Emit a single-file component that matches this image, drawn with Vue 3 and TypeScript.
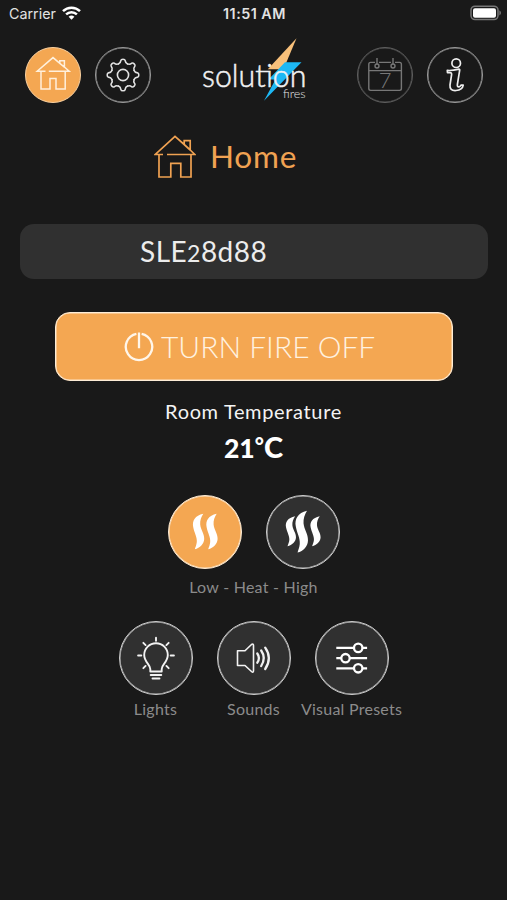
<script setup lang="ts">
import { ref } from 'vue'

type Heat = 'low' | 'high'
const heat = ref<Heat>('low')
const room = { value: '21', unit: 'C' }
const teeth = [0, 45, 90, 135, 180, 225, 270, 315]
const rays = [-135, -90, -45, 0, 45, 90, 135]
const flame =
  'M35.3 18.8C27 20.5 24 26 25.2 32C26.3 38 29.300 42 28.800 47C28.500 50 27.500 52 26.800 54.300C32 53 36 49 36.200 44C36.400 38.500 32.700 35 32.200 29.500C31.900 25.500 33.200 22 35.300 18.800Z'
</script>

<template>
  <main class="screen">
    <header class="status">
      <div class="carrier">
        <span>Carrier</span>
        <svg width="19" height="14" viewBox="0 0 19 14" fill="none" stroke="#fff" stroke-width="2.5">
          <path d="M1 5.2a12.2 12.2 0 0 1 17 0" />
          <path d="M4.1 8.4a7.8 7.8 0 0 1 10.8 0" />
          <path d="M9.5 13.8 6.6 10.8a4.3 4.3 0 0 1 5.8 0Z" fill="#fff" stroke="none" />
        </svg>
      </div>
      <span class="time">11:51 AM</span>
      <svg class="battery" width="32" height="16" viewBox="0 0 32 16">
        <rect x="1" y="1.2" width="27" height="13.4" rx="4" fill="none" stroke="#777" stroke-width="1.5" />
        <rect x="3" y="3.2" width="23" height="9.6" rx="2" fill="#fff" />
        <path d="M29.4 5.3q3.2 2.6 0 5.2Z" fill="#777" />
      </svg>
    </header>

    <nav class="nav">
      <button class="nav-btn active" aria-label="Home">
        <svg width="56" height="56" viewBox="0 0 56 56" fill="none" stroke="#fff0dc" stroke-width="1.5">
          <path d="M16 24.2H12.2L28 10.6l6.8 5.8v-2.6h4.6v6.2l4.8 4.2H40.2V42H31V31.5h-6V42H16V24.2h4.5M23.800 24.2H40.2M34.800 16.4l4.6 3.8" />
        </svg>
      </button>
      <button class="nav-btn" aria-label="Settings">
        <svg width="56" height="56" viewBox="0 0 56 56" fill="none" stroke="#e2e2e2" stroke-width="1.6" stroke-linejoin="round" stroke-linecap="round">
          <circle cx="28" cy="28" r="5.6" />
          <path
            v-for="a in teeth"
            :key="a"
            :transform="`rotate(${a} 28 28)`"
            d="M23.4 16.9Q25.6 16.1 25.9 13.4Q26.1 12.2 28 12.2Q29.9 12.2 30.1 13.4Q30.4 16.1 32.6 16.9"
          />
        </svg>
      </button>
      <svg class="logo" width="108" height="68" viewBox="0 0 108 68">
        <path d="M96.500 2.300 67.800 33.300H83.500Z" fill="#f8c07a" />
        <path d="M85 26.300H101.500L64 64.800 75.500 43.500H68.500Z" fill="#1db8f4" />
        <text class="logo-word" x="2" y="51" textLength="104.500" lengthAdjust="spacingAndGlyphs">solution</text>
        <text class="logo-sub" x="83" y="62" textLength="22.600" lengthAdjust="spacingAndGlyphs">fires</text>
      </svg>
      <button class="nav-btn muted" aria-label="Schedule">
        <svg width="56" height="56" viewBox="0 0 56 56" fill="none" stroke="#777" stroke-width="1.4">
          <path d="M18 15.4h-4.4q-1.8 0-1.8 1.8v24.4q0 1.8 1.8 1.8h29q1.8 0 1.8-1.8V17.2q0-1.8-1.8-1.8H38M22 15.4h12M11.8 23.6h32.6M20 11v6.5M36 11v6.5" />
          <circle cx="20" cy="19" r="2" />
          <circle cx="36" cy="19" r="2" />
          <text class="cal-day" x="28.2" y="41" text-anchor="middle">7</text>
        </svg>
      </button>
      <button class="nav-btn" aria-label="Information">
        <svg width="56" height="56" viewBox="0 0 56 56" fill="none" stroke="#eee" stroke-width="1.7" stroke-linejoin="round">
          <circle cx="29.2" cy="16.2" r="4.3" />
          <path d="M20.3 23.4q4.300.5 11.700-1.200.8 0 .7 1L30.400 37.300q-.4 3.200 2 2.400 1.300-.5 1.600-1.600h2.200q-.8 5-7.200 5.400-6.600.5-6-5.500l1.600-10.400q.3-1.900-1.500-1.900h-2.600Z" />
        </svg>
      </button>
    </nav>

    <h1 class="title">
      <svg width="42" height="44" viewBox="0 0 42 44" fill="none" stroke="#f0a252" stroke-width="1.7">
        <path d="M5 20.500H1.300L21 2.300l9.200 8.200V6.600h6v9.400l4.600 4.500H37V43H26.800V29.300h-10V43H5V20.500h4M13 20.500h24M30.200 10.500l6 5.500" />
      </svg>
      <span>Home</span>
    </h1>

    <div class="device">
      <span class="device-name">SLE<span class="old">2</span>8d88</span>
    </div>

    <button class="power">
      <svg width="32" height="32" viewBox="0 0 32 32" fill="none" stroke="#fff6ea" stroke-width="2.3">
        <path d="M13.4 2.900A13.200 13.200 0 1 0 18.600 2.900M16 1.500V17.300" />
      </svg>
      <span>TURN FIRE OFF</span>
    </button>

    <p class="room-label"><span>Room Temperature</span></p>
    <p class="room-value"><span class="num">{{ room.value }}</span><span class="deg">°</span><span>{{ room.unit }}</span></p>

    <section class="row heat">
      <button class="round" :class="{ on: heat === 'low' }" aria-label="Low heat" @click="heat = 'low'">
        <svg width="74" height="74" viewBox="0 0 74 74" fill="#fff">
          <path :d="flame" />
          <path :d="flame" transform="translate(13.4 0)" />
        </svg>
      </button>
      <button class="round" :class="{ on: heat === 'high' }" aria-label="High heat" @click="heat = 'high'">
        <svg width="74" height="74" viewBox="0 0 74 74" fill="#fff">
          <path :d="flame" transform="translate(-2.6 5.4) scale(0.9 0.845)" />
          <path :d="flame" transform="translate(1.800 -6.500) scale(1.110 1.180)" />
          <path :d="flame" transform="translate(22 5.4) scale(0.9 0.845)" />
        </svg>
      </button>
    </section>
    <p class="caption heat-caption"><span>Low - Heat - High</span></p>

    <section class="row tools">
      <div class="tool">
        <button class="round" aria-label="Lights">
          <svg width="74" height="74" viewBox="0 0 74 74" fill="none" stroke="#f2f2f2" stroke-width="1.900" stroke-linecap="round">
            <path d="M31.300 50.500V48C31.300 43.500 25.200 41 25.200 34A11.800 11.800 0 0 1 48.800 34C48.800 41 42.700 43.500 42.700 48V50.500Z" stroke-linejoin="round" />
            <path d="M31.700 54h10.600M33.500 57.500h7" />
            <path v-for="a in rays" :key="a" :transform="`rotate(${a} 37 34.500)`" d="M37 19.800V16.600" />
          </svg>
        </button>
        <span class="caption">Lights</span>
      </div>
      <div class="tool">
        <button class="round" aria-label="Sounds">
          <svg width="74" height="74" viewBox="0 0 74 74" fill="none" stroke="#f2f2f2" stroke-width="1.600" stroke-linejoin="round">
            <path d="M20.500 29.800H28L34.500 23.500Q36.500 22.300 36.500 24.500V49.500Q36.500 52.200 34.500 50.500L28 44.500H20.500Z" />
            <g stroke-width="2.300" stroke-linecap="round">
              <path d="M40.300 32.500Q43.500 37 40.300 41.700M44.200 29.500Q49.300 37 44.200 45M48.200 26.600Q55.500 37 48.200 48" />
            </g>
          </svg>
        </button>
        <span class="caption">Sounds</span>
      </div>
      <div class="tool">
        <button class="round" aria-label="Visual Presets">
          <svg width="74" height="74" viewBox="0 0 74 74" fill="none" stroke="#fff" stroke-width="2.300">
            <path d="M21.300 26.900h17.500M47.600 26.900h4.500M21.300 37.200h5M34.900 37.200h17.200M21.300 47.300h17.500M47.600 47.300h4.500" />
            <circle cx="43.200" cy="26.900" r="4.200" />
            <circle cx="30.500" cy="37.200" r="4.200" />
            <circle cx="43.200" cy="47.300" r="4.200" />
          </svg>
        </button>
        <span class="caption">Visual Presets</span>
      </div>
    </section>
  </main>
</template>

<style>
body {
  background: #191919;
}
</style>

<style scoped>
.screen {
  box-sizing: border-box;
  width: 507px;
  height: 900px;
  overflow: hidden;
  background: #191919;
  color: #f4f4f4;
  font-family: Lato, sans-serif;
}
button {
  box-sizing: border-box;
  padding: 0;
  margin: 0;
  font: inherit;
  color: inherit;
}
p,
h1 {
  margin: 0;
  font-weight: 400;
}
svg {
  display: block;
  flex: none;
}
.status {
  height: 28px;
  padding: 0 5px 0 9px;
  display: grid;
  grid-template-columns: 1fr auto 1fr;
  align-items: center;
  box-sizing: border-box;
  font: 400 14.300px/28px Inter, sans-serif;
  color: #e2e2e2;
}
.carrier {
  display: flex;
  align-items: center;
  gap: 6px;
}
.carrier svg {
  margin-top: -2px;
}
.time {
  margin-left: -2px;
  font-weight: 600;
  letter-spacing: 0.500px;
}
.battery {
  justify-self: end;
  margin-bottom: 2px;
}
.nav {
  height: 56px;
  margin-top: 19px;
  padding: 0 24px 0 25px;
  display: flex;
}
.nav-btn {
  width: 56px;
  height: 56px;
  border: 1px solid #9c9c9c;
  box-shadow: inset 0 0 0 0.500px #8a8a8a;
  border-radius: 50%;
  background: transparent;
  display: flex;
  align-items: center;
  justify-content: center;
  flex: none;
}
.nav-btn + .nav-btn {
  margin-left: 14px;
}
.nav-btn.active {
  background: #f4a752;
  border-color: #f9d0a0;
  box-shadow: none;
}
.nav-btn.muted {
  border-color: #606060;
  box-shadow: inset 0 0 0 0.500px #505050;
}
.logo {
  margin: -11px auto 0;
  overflow: visible;
}
.logo-word {
  font: 300 32px Lato, sans-serif;
  fill: #f2f2f2;
  stroke: #f2f2f2;
  stroke-width: 0.500px;
}
.logo-sub {
  font: 300 12px Lato, sans-serif;
  fill: #e6e6e6;
}
.cal-day {
  font: 300 22px Lato, sans-serif;
  fill: #777;
  stroke: none;
}
.title {
  height: 44px;
  margin-top: 31px;
  padding-left: 154px;
  display: flex;
  align-items: center;
  gap: 14px;
  font-size: 31.500px;
  line-height: 44px;
  letter-spacing: 0.800px;
  color: #f0a252;
}
.device {
  box-sizing: border-box;
  height: 55px;
  margin: 46px 19px 0 20px;
  padding: 0 0 2px 120px;
  border-radius: 14px;
  background: #303030;
  display: flex;
  align-items: center;
}
.device-name {
  font-size: 28px;
  letter-spacing: 0.450px;
  color: #ececec;
}
.old {
  font-size: 23px;
}
.power {
  width: 398px;
  height: 69px;
  margin: 33px 0 0 55px;
  padding: 0 0 0 67px;
  border: 1px solid #fdecd6;
  box-shadow: inset 0 0 0 0.500px #fbe3c4;
  border-radius: 15px;
  background: #f4a752;
  display: flex;
  align-items: center;
  gap: 6px;
  font-size: 30px;
  font-weight: 300;
  line-height: 60px;
  color: #fff2e0;
  white-space: nowrap;
}
.power span {
  margin-top: -2px;
}
.room-label {
  margin-top: 18px;
  text-align: center;
  font-size: 20px;
  line-height: 24px;
  letter-spacing: 0.650px;
}
.room-value {
  height: 36px;
  margin-top: 6px;
  display: flex;
  justify-content: center;
  align-items: baseline;
  font-size: 29px;
  line-height: 36px;
  font-weight: 900;
  color: #fff;
}
.room-value .num {
  font-size: 26.500px;
}
.room-value .deg {
  font-size: 22px;
  transform: translateY(-4px);
}
.row {
  display: flex;
  justify-content: center;
  gap: 24px;
}
.heat {
  margin-top: 30px;
}
.round {
  width: 74px;
  height: 74px;
  border: 1px solid #cfcfcf;
  box-shadow: inset 0 0 0 0.500px #bdbdbd;
  border-radius: 50%;
  background: #303030;
  display: flex;
  align-items: center;
  justify-content: center;
  flex: none;
}
.round.on {
  background: #f4a752;
  border-color: #fdecd6;
  box-shadow: inset 0 0 0 0.500px #fbe3c4;
}
.caption {
  font-size: 16px;
  line-height: 20px;
  color: #8b8b8b;
  white-space: nowrap;
  letter-spacing: 0.250px;
}
.heat-caption {
  margin-top: 8px;
  text-align: center;
}
.tools {
  margin-top: 24px;
}
.tool {
  width: 74px;
  display: flex;
  flex-direction: column;
  align-items: center;
  gap: 4px;
}
</style>
